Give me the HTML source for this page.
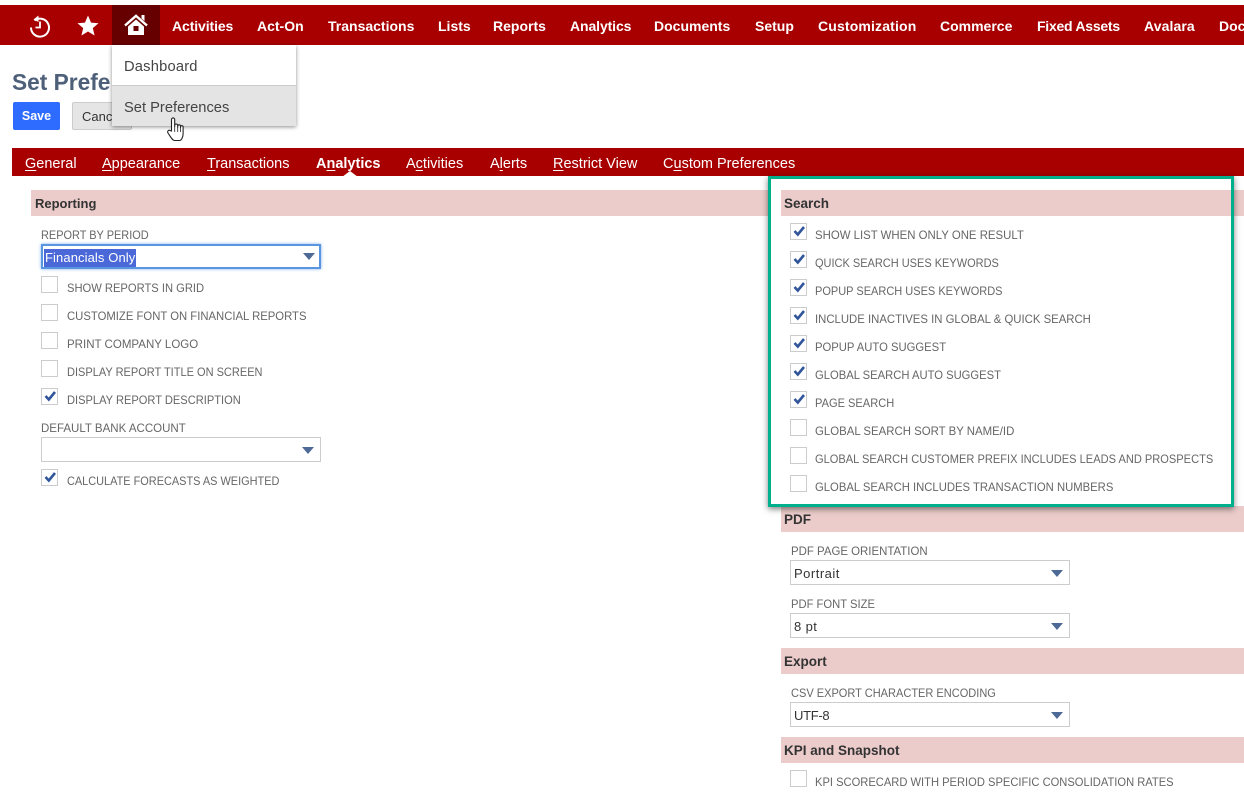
<!DOCTYPE html>
<html lang="en"><head><meta charset="utf-8"><title>Set Preferences</title>
<style>
html,body{margin:0;padding:0;background:#fff}
#p{position:relative;width:1244px;height:799px;overflow:hidden;font-family:"Liberation Sans",Arial,sans-serif;background:#fff}
#p div,#p span.t{position:absolute;white-space:nowrap}
.bar{left:0;top:5px;width:1244px;height:40px;background:#a80000}
.m{top:5px;height:40px;line-height:42px;font-size:14px;font-weight:bold;color:#fff}
.tabs{left:12px;top:148px;width:1232px;height:28px;background:#a80000}
.tb{top:148px;height:28px;line-height:32px;font-size:14.5px;color:#fff}
u{text-underline-offset:2px}
.h{height:26px;line-height:28px;background:#ebcccb;font-size:13px;font-weight:bold;color:#333;padding-left:4px;box-sizing:border-box}
.r{padding-left:3px;font-size:13.5px}
.l{font-size:12px;line-height:15px;color:#666;transform-origin:0 50%}
.c{width:17px;height:17px;border:1px solid #ccc;box-sizing:border-box;background:#fff}
.c svg{position:absolute;left:2px;top:1px}
.s{width:280px;height:25px;border:1px solid #ccc;box-sizing:border-box;background:#fff;font-size:13px;line-height:25px;color:#333;padding-left:3px}
.s i{position:absolute;right:6px;top:9px;width:0;height:0;border-left:6.5px solid transparent;border-right:6.5px solid transparent;border-top:7px solid #4d6a96}
</style></head><body><div id="p">
<div class="bar"></div>
<div style="left:112px;top:5px;width:48px;height:40px;background:#660000"></div>
<svg style="position:absolute;left:28px;top:14px" width="24" height="24" viewBox="0 0 24 24" fill="none" stroke="#fff" stroke-width="2"><path d="M6.500 6.500A9 9 0 1 1 3 13.500"/><path d="M12 7.500V13.500H7.500" stroke-width="1.800"/><path d="M10.500 1.500L5.500 5.500L10.500 8Z" fill="#fff" stroke="none"/></svg>
<svg style="position:absolute;left:77px;top:15px" width="22" height="21" viewBox="0 0 22 21"><path d="M11 .5L14 7.600L21.500 8.200L15.800 13.100L17.600 20.500L11 16.500L4.400 20.500L6.200 13.100L.5 8.200L8 7.600Z" fill="#fff"/></svg>
<svg style="position:absolute;left:124px;top:14px" width="24" height="22" viewBox="0 0 24 22"><path d="M1 11.500L12 1.800L23 11.500" fill="none" stroke="#fff" stroke-width="2.400"/><path d="M17.500 1H20.500V7L17.500 4.500Z" fill="#fff"/><path fill-rule="evenodd" d="M4 12.500L12 5.500L20 12.500V21H4ZM9.500 12V17H14.500V12Z" fill="#fff"/></svg>
<span class="t m" style="left:172px;letter-spacing:-.1px">Activities</span>
<span class="t m" style="left:257px">Act-On</span>
<span class="t m" style="left:328px">Transactions</span>
<span class="t m" style="left:438px">Lists</span>
<span class="t m" style="left:493px">Reports</span>
<span class="t m" style="left:570px;letter-spacing:-.1px">Analytics</span>
<span class="t m" style="left:654px">Documents</span>
<span class="t m" style="left:755px">Setup</span>
<span class="t m" style="left:818px;letter-spacing:.15px">Customization</span>
<span class="t m" style="left:940px">Commerce</span>
<span class="t m" style="left:1037px;letter-spacing:-.25px">Fixed Assets</span>
<span class="t m" style="left:1144px;letter-spacing:.1px">Avalara</span>
<span class="t m" style="left:1219px">Documents</span>

<span class="t" style="left:12px;top:68px;font-size:22.700px;line-height:28px;font-weight:bold;color:#4d5f79">Set Prefe</span>
<div style="left:13px;top:102px;width:47px;height:28px;background:#2d6cff;border-radius:2px;color:#fff;font-size:12.500px;font-weight:bold;line-height:29px;text-align:center">Save</div>
<div style="left:72px;top:102px;width:60px;height:28px;background:#e5e5e5;border:1px solid #ccc;box-sizing:border-box;border-radius:2px;color:#333;font-size:13px;line-height:27px;padding-left:9px">Cancel</div>

<div style="left:112px;top:45px;width:184px;height:81px;background:#fff;box-shadow:0 1px 4px rgba(0,0,0,.45);z-index:5">
<div style="left:0;top:0;width:184px;height:41px;line-height:44px;font-size:14.700px;letter-spacing:.2px;color:#444;padding-left:12px;box-sizing:border-box;border-bottom:1px solid #ccc">Dashboard</div>
<div style="left:0;top:41px;width:184px;height:40px;line-height:44px;font-size:14.700px;color:#444;padding-left:12px;box-sizing:border-box;background:#e4e4e4">Set Preferences</div>
</div>
<svg style="position:absolute;left:166px;top:116px;z-index:6" width="20" height="26" viewBox="0 0 20 26"><path d="M5.500 15V3.500a1.600 1.600 0 0 1 3.200 0V11V9.500a1.500 1.500 0 0 1 3 0V11.500V10.200a1.400 1.400 0 0 1 2.800 0V12V11a1.300 1.300 0 0 1 2.600 0V18C17 21 15.500 24.500 13.500 24.500H8.500C6.500 24.500 5 21.500 2 17C1 15.500 2.500 13.500 4 14.500Z" fill="#fff" stroke="#222" stroke-width="1.100"/><path d="M8.700 11v5M11.700 11v5M14.500 12v4" stroke="#222" stroke-width=".8"/></svg>

<div class="tabs"></div>
<span class="t tb" style="left:25px"><u>G</u>eneral</span>
<span class="t tb" style="left:102px"><u>A</u>ppearance</span>
<span class="t tb" style="left:207px"><u>T</u>ransactions</span>
<span class="t tb" style="left:316px;font-weight:bold">A<u>n</u>alytics</span>
<span class="t tb" style="left:406px">A<u>c</u>tivities</span>
<span class="t tb" style="left:490px">A<u>l</u>erts</span>
<span class="t tb" style="left:553px"><u>R</u>estrict View</span>
<span class="t tb" style="left:663px">C<u>u</u>stom Preferences</span>
<svg style="position:absolute;left:342px;top:171px" width="16" height="6"><path d="M0 6L8 0L16 6Z" fill="#fff"/></svg>

<div class="h" style="left:31px;top:190px;width:739px">Reporting</div>
<span class="t l" style="left:41px;top:228px;transform:scaleX(.912)">REPORT BY PERIOD</span>
<div class="s" style="left:41px;top:244px;border:2px solid #5a95e0;box-shadow:0 0 3px #7fb0ee;line-height:23px;padding-left:1px;color:#fff"><span style="background:#4a68d8;display:inline-block;line-height:18px;padding:0 1px;letter-spacing:.1px">Financials Only</span><i style="right:4px;top:7px"></i></div>
<div class="c" style="left:41px;top:276px"></div><span class="t l" style="left:67px;top:281px;transform:scaleX(.932)">SHOW REPORTS IN GRID</span>
<div class="c" style="left:41px;top:304px"></div><span class="t l" style="left:67px;top:309px;transform:scaleX(.942)">CUSTOMIZE FONT ON FINANCIAL REPORTS</span>
<div class="c" style="left:41px;top:332px"></div><span class="t l" style="left:67px;top:337px;transform:scaleX(.96)">PRINT COMPANY LOGO</span>
<div class="c" style="left:41px;top:360px"></div><span class="t l" style="left:67px;top:365px;transform:scaleX(.918)">DISPLAY REPORT TITLE ON SCREEN</span>
<div class="c" style="left:41px;top:388px"><svg width="12" height="12"><path d="M1.500 6L4.800 9.500L11 2" fill="none" stroke="#31559b" stroke-width="2.600"/></svg></div><span class="t l" style="left:67px;top:393px;transform:scaleX(.925)">DISPLAY REPORT DESCRIPTION</span>
<span class="t l" style="left:41px;top:421px;transform:scaleX(.959)">DEFAULT BANK ACCOUNT</span>
<div class="s" style="left:41px;top:437px"><i></i></div>
<div class="c" style="left:41px;top:469px"><svg width="12" height="12"><path d="M1.500 6L4.800 9.500L11 2" fill="none" stroke="#31559b" stroke-width="2.600"/></svg></div><span class="t l" style="left:67px;top:474px;transform:scaleX(.911)">CALCULATE FORECASTS AS WEIGHTED</span>

<div class="h r" style="left:781px;top:190px;width:463px">Search</div>
<div class="c" style="left:790px;top:223px"><svg width="12" height="12"><path d="M1.500 6L4.800 9.500L11 2" fill="none" stroke="#31559b" stroke-width="2.600"/></svg></div><span class="t l" style="left:815px;top:228px;transform:scaleX(.95)">SHOW LIST WHEN ONLY ONE RESULT</span>
<div class="c" style="left:790px;top:251px"><svg width="12" height="12"><path d="M1.500 6L4.800 9.500L11 2" fill="none" stroke="#31559b" stroke-width="2.600"/></svg></div><span class="t l" style="left:815px;top:256px;transform:scaleX(.916)">QUICK SEARCH USES KEYWORDS</span>
<div class="c" style="left:790px;top:279px"><svg width="12" height="12"><path d="M1.500 6L4.800 9.500L11 2" fill="none" stroke="#31559b" stroke-width="2.600"/></svg></div><span class="t l" style="left:815px;top:284px;transform:scaleX(.917)">POPUP SEARCH USES KEYWORDS</span>
<div class="c" style="left:790px;top:307px"><svg width="12" height="12"><path d="M1.500 6L4.800 9.500L11 2" fill="none" stroke="#31559b" stroke-width="2.600"/></svg></div><span class="t l" style="left:815px;top:312px;transform:scaleX(.946)">INCLUDE INACTIVES IN GLOBAL &amp; QUICK SEARCH</span>
<div class="c" style="left:790px;top:335px"><svg width="12" height="12"><path d="M1.500 6L4.800 9.500L11 2" fill="none" stroke="#31559b" stroke-width="2.600"/></svg></div><span class="t l" style="left:815px;top:340px;transform:scaleX(.939)">POPUP AUTO SUGGEST</span>
<div class="c" style="left:790px;top:363px"><svg width="12" height="12"><path d="M1.500 6L4.800 9.500L11 2" fill="none" stroke="#31559b" stroke-width="2.600"/></svg></div><span class="t l" style="left:815px;top:368px;transform:scaleX(.936)">GLOBAL SEARCH AUTO SUGGEST</span>
<div class="c" style="left:790px;top:391px"><svg width="12" height="12"><path d="M1.500 6L4.800 9.500L11 2" fill="none" stroke="#31559b" stroke-width="2.600"/></svg></div><span class="t l" style="left:815px;top:396px;transform:scaleX(.923)">PAGE SEARCH</span>
<div class="c" style="left:790px;top:419px"></div><span class="t l" style="left:815px;top:424px;transform:scaleX(.951)">GLOBAL SEARCH SORT BY NAME/ID</span>
<div class="c" style="left:790px;top:447px"></div><span class="t l" style="left:815px;top:452px;transform:scaleX(.923)">GLOBAL SEARCH CUSTOMER PREFIX INCLUDES LEADS AND PROSPECTS</span>
<div class="c" style="left:790px;top:475px"></div><span class="t l" style="left:815px;top:480px;transform:scaleX(.94)">GLOBAL SEARCH INCLUDES TRANSACTION NUMBERS</span>

<div class="h r" style="left:781px;top:506px;width:463px;height:26px">PDF</div>
<span class="t l" style="left:791px;top:544px;transform:scaleX(.953)">PDF PAGE ORIENTATION</span>
<div class="s" style="left:790px;top:560px;letter-spacing:.5px">Portrait<i></i></div>
<span class="t l" style="left:791px;top:597px;transform:scaleX(.935)">PDF FONT SIZE</span>
<div class="s" style="left:790px;top:613px;letter-spacing:.4px">8 pt<i></i></div>
<div class="h r" style="left:781px;top:648px;width:463px">Export</div>
<span class="t l" style="left:791px;top:686px;transform:scaleX(.919)">CSV EXPORT CHARACTER ENCODING</span>
<div class="s" style="left:790px;top:702px;letter-spacing:-.3px">UTF-8<i></i></div>
<div class="h r" style="left:781px;top:737px;width:463px">KPI and Snapshot</div>
<div class="c" style="left:790px;top:770px"></div><span class="t l" style="left:815px;top:775px;transform:scaleX(.93)">KPI SCORECARD WITH PERIOD SPECIFIC CONSOLIDATION RATES</span>

<div style="left:768px;top:176px;width:466px;height:331px;border:3px solid #00b08c;box-sizing:border-box;box-shadow:0 2px 6px rgba(0,0,0,.5)"></div>
</div></body></html>
